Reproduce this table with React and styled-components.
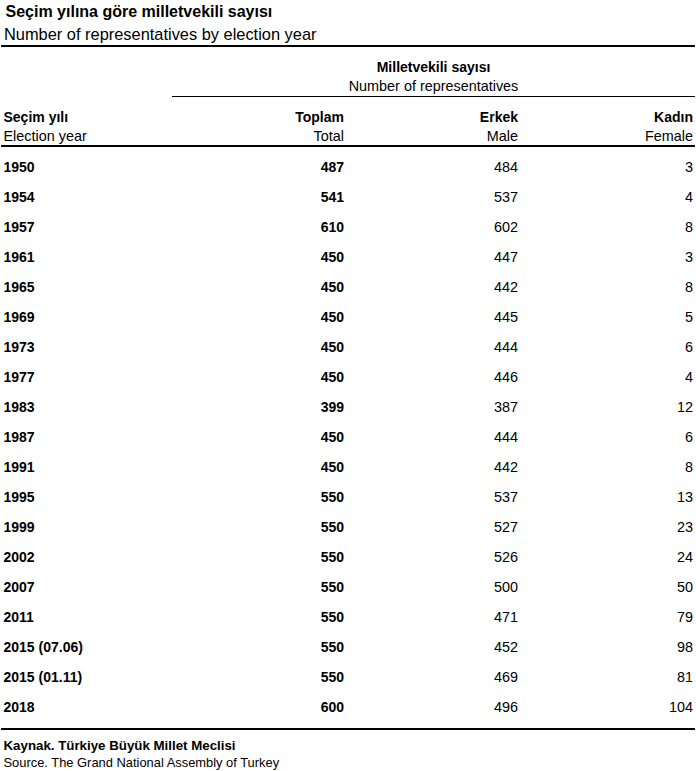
import React from "react";
import styled, { createGlobalStyle } from "styled-components";

const GlobalStyle = createGlobalStyle`
  html, body { margin: 0; padding: 0; background: #fff; }
  body { font-family: "Liberation Sans", Arial, sans-serif; color: #000; }
`;

const Page = styled.div`
  margin-left: 1px;
  width: 694px;
`;

const TitleBlock = styled.header`
  padding: 2px 0 0 4.5px;
  border-bottom: 2px solid #000;
`;

const Title = styled.div`
  font-weight: bold;
  font-size: 16px;
  line-height: 20px;
  white-space: nowrap;
`;

const Subtitle = styled.div`
  font-size: 16.4px;
  line-height: 22px;
  margin-top: 1px;
  margin-left: -1.5px;
  white-space: nowrap;
`;

const GroupRow = styled.div`
  display: grid;
  grid-template-columns: 171px 1fr;
`;

const GroupCell = styled.div`
  grid-column: 2;
  padding-top: 10px;
  text-align: center;
  border-bottom: 1px solid #000;
`;

const BoldLine = styled.div`
  font-weight: bold;
  font-size: 14px;
  line-height: ${(p) => p.$lh || 20}px;
  white-space: nowrap;
`;

const PlainLine = styled.div`
  font-size: 14.4px;
  line-height: ${(p) => p.$lh || 19}px;
  white-space: nowrap;
`;

const columns = "171px 174px 174px 175px";

const HeadRow = styled.div`
  display: grid;
  grid-template-columns: ${columns};
  padding-top: 10px;
  border-bottom: 2px solid #000;
`;

const HeadCell = styled.div`
  text-align: ${(p) => (p.$left ? "left" : "right")};
  padding: ${(p) => (p.$left ? "0 0 0 2.5px" : "0 2px 0 0")};
`;

const Body = styled.div`
  padding: 5px 0 6px;
  border-bottom: 2px solid #000;
`;

const Row = styled.div`
  display: grid;
  grid-template-columns: ${columns};
  height: 30px;
  line-height: 30px;
`;

const Cell = styled.div`
  font-size: ${(p) => (p.$bold ? "14px" : "14.4px")};
  font-weight: ${(p) => (p.$bold ? "bold" : "normal")};
  text-align: ${(p) => (p.$left ? "left" : "right")};
  padding: ${(p) => (p.$left ? "0 0 0 2.5px" : "0 2px 0 0")};
  white-space: nowrap;
`;

const Footer = styled.footer`
  padding: 7px 0 0 2.5px;
`;

const SourceBold = styled.div`
  font-weight: bold;
  font-size: 13.3px;
  line-height: 17px;
  white-space: nowrap;
`;

const SourcePlain = styled.div`
  font-size: 12.9px;
  line-height: 17px;
  white-space: nowrap;
`;

const data = [
  ["1950", 487, 484, 3],
  ["1954", 541, 537, 4],
  ["1957", 610, 602, 8],
  ["1961", 450, 447, 3],
  ["1965", 450, 442, 8],
  ["1969", 450, 445, 5],
  ["1973", 450, 444, 6],
  ["1977", 450, 446, 4],
  ["1983", 399, 387, 12],
  ["1987", 450, 444, 6],
  ["1991", 450, 442, 8],
  ["1995", 550, 537, 13],
  ["1999", 550, 527, 23],
  ["2002", 550, 526, 24],
  ["2007", 550, 500, 50],
  ["2011", 550, 471, 79],
  ["2015 (07.06)", 550, 452, 98],
  ["2015 (01.11)", 550, 469, 81],
  ["2018", 600, 496, 104],
];

const heads = [
  ["Seçim yılı", "Election year"],
  ["Toplam", "Total"],
  ["Erkek", "Male"],
  ["Kadın", "Female"],
];

export default function App() {
  return (
    <>
      <GlobalStyle />
      <Page>
        <TitleBlock>
          <Title>Seçim yılına göre milletvekili sayısı</Title>
          <Subtitle>Number of representatives by election year</Subtitle>
        </TitleBlock>
        <GroupRow>
          <GroupCell>
            <BoldLine>Milletvekili sayısı</BoldLine>
            <PlainLine>Number of representatives</PlainLine>
          </GroupCell>
        </GroupRow>
        <HeadRow>
          {heads.map(([tr, en], i) => (
            <HeadCell key={tr} $left={i === 0}>
              <BoldLine>{tr}</BoldLine>
              <PlainLine $lh={18}>{en}</PlainLine>
            </HeadCell>
          ))}
        </HeadRow>
        <Body>
          {data.map(([year, total, male, female]) => (
            <Row key={year}>
              <Cell $bold $left>{year}</Cell>
              <Cell $bold>{total}</Cell>
              <Cell>{male}</Cell>
              <Cell>{female}</Cell>
            </Row>
          ))}
        </Body>
        <Footer>
          <SourceBold>Kaynak. Türkiye Büyük Millet Meclisi</SourceBold>
          <SourcePlain>Source. The Grand National Assembly of Turkey</SourcePlain>
        </Footer>
      </Page>
    </>
  );
}
